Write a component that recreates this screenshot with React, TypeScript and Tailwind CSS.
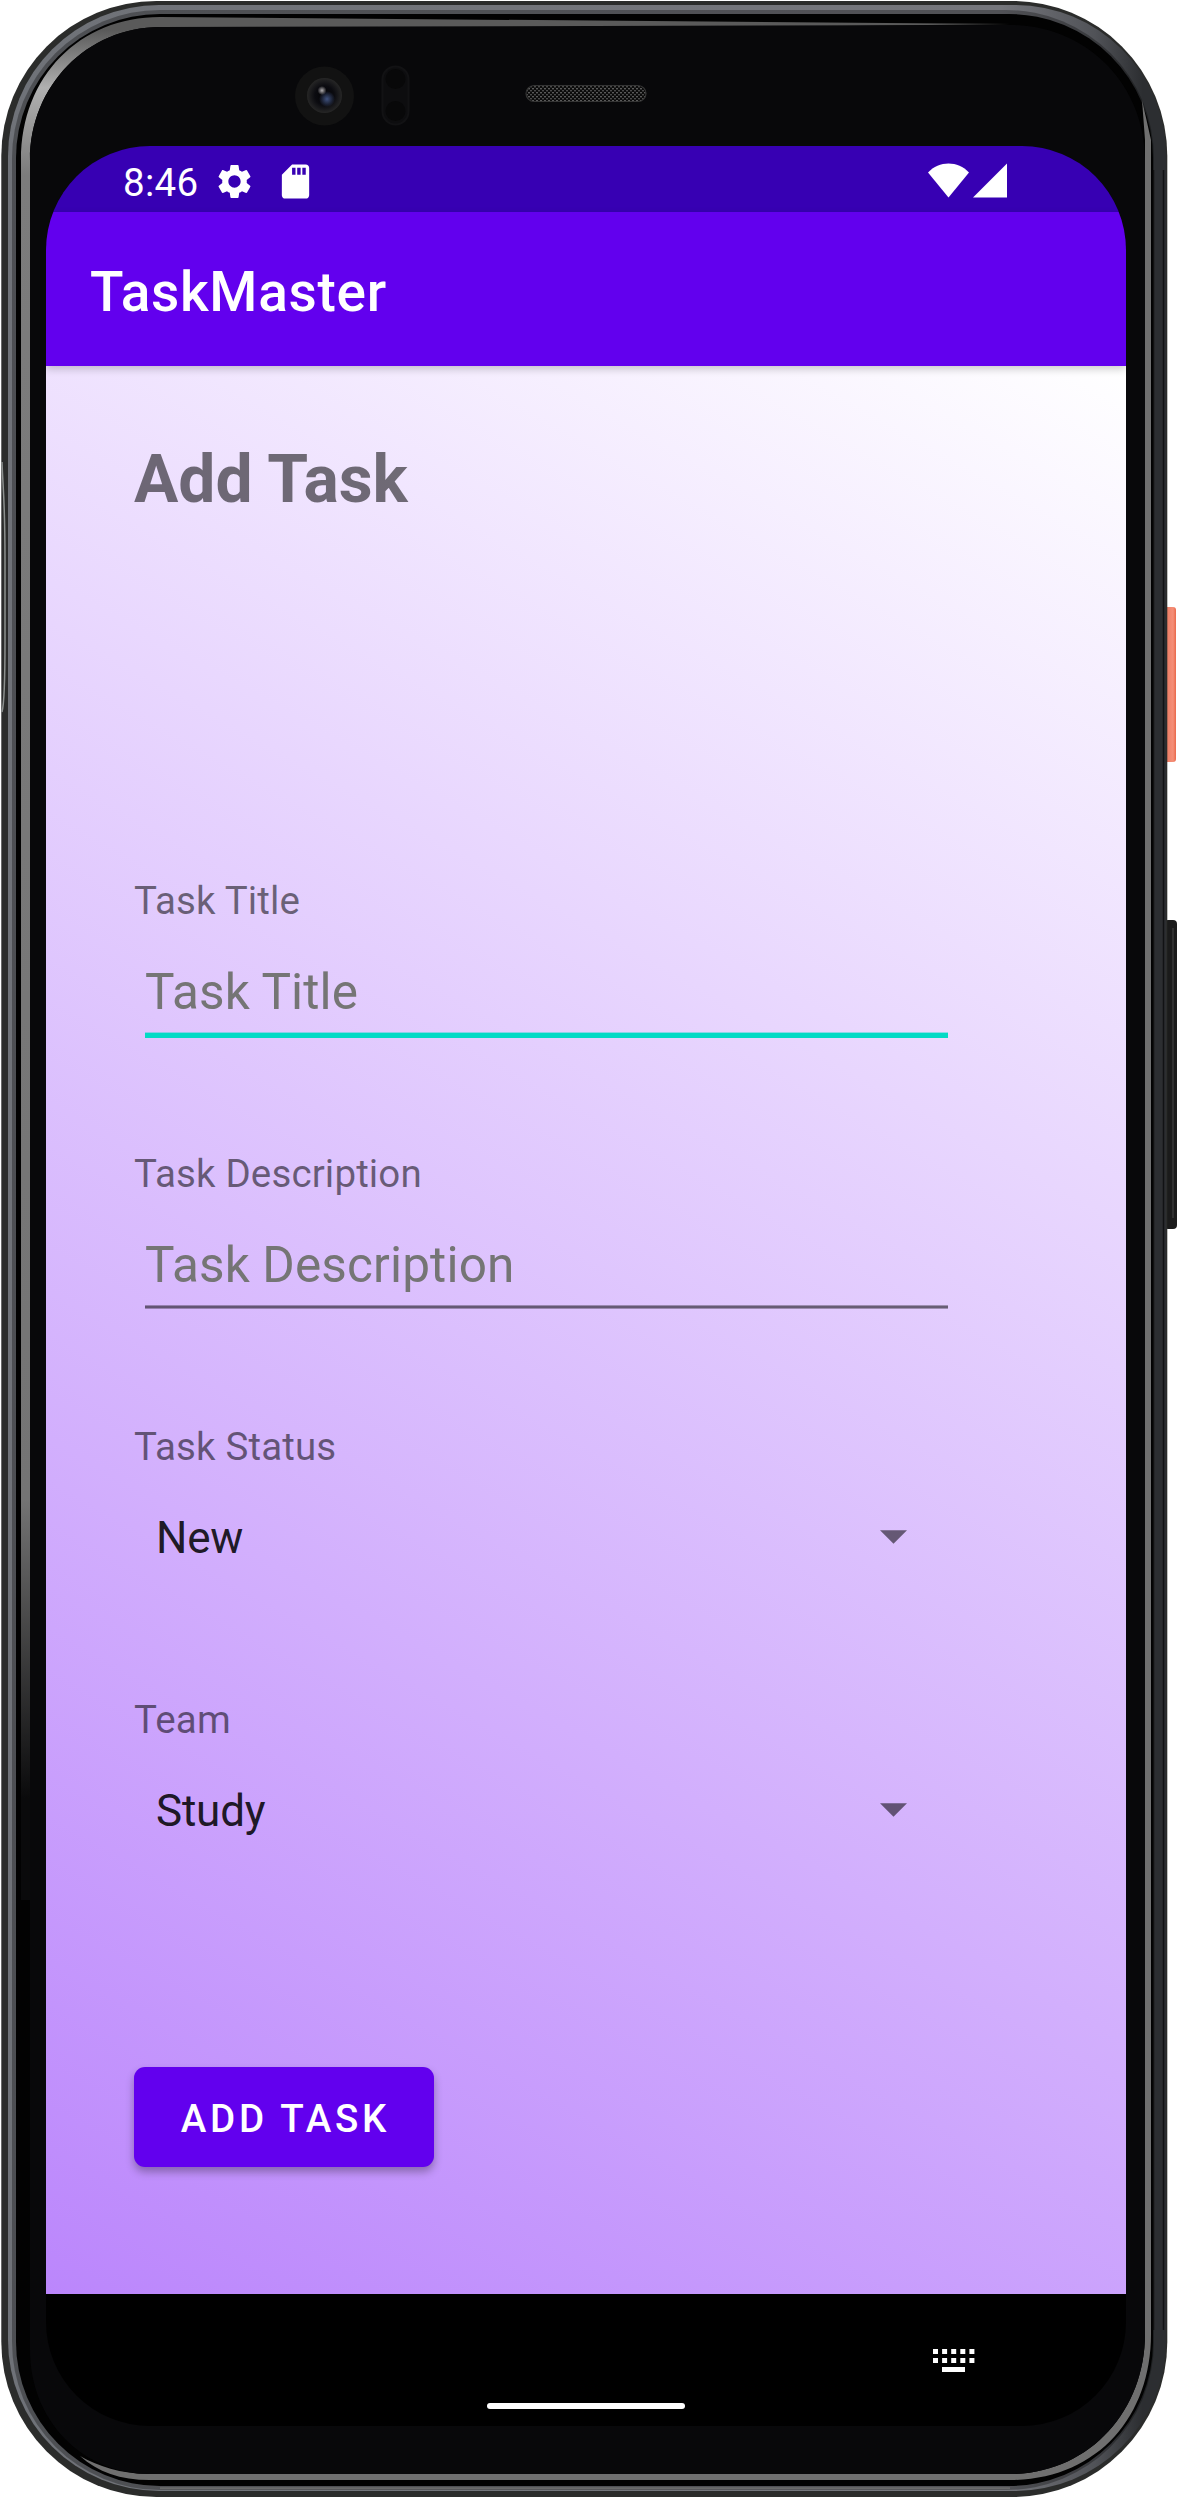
import React from "react";

/* Phone shell artwork: metal rim, glass edge, side keys, camera and speaker. */
function DeviceShell() {
  return (
    <svg className="absolute inset-0" width="1178" height="2498" viewBox="0 0 1178 2498" aria-hidden="true">
      <defs>
        <linearGradient id="rim" gradientUnits="userSpaceOnUse" x1="0" y1="0" x2="1178" y2="0">
          <stop offset="0" stopColor="#6f7278" />
          <stop offset="0.85" stopColor="#75767c" />
          <stop offset="0.93" stopColor="#505257" />
          <stop offset="0.97" stopColor="#2c2e31" />
          <stop offset="1" stopColor="#2c2e31" />
        </linearGradient>
        <linearGradient id="glassLeft" gradientUnits="userSpaceOnUse" x1="0" y1="0" x2="0" y2="2498">
          <stop offset="0" stopColor="#5a5a5a" />
          <stop offset="0.012" stopColor="#5a5a5a" />
          <stop offset="0.035" stopColor="#b0b0b0" />
          <stop offset="0.07" stopColor="#7c7c7c" />
          <stop offset="0.6" stopColor="#747474" />
          <stop offset="0.72" stopColor="#0a0a0b" />
          <stop offset="1" stopColor="#0a0a0b" />
        </linearGradient>
        <linearGradient id="power" x1="0" y1="0" x2="1" y2="0">
          <stop offset="0" stopColor="#c9543b" />
          <stop offset="0.3" stopColor="#ef8068" />
          <stop offset="0.75" stopColor="#f58f78" />
          <stop offset="1" stopColor="#e9694b" />
        </linearGradient>
        <radialGradient id="lens" cx="0.5" cy="0.5" r="0.5">
          <stop offset="0" stopColor="#020205" />
          <stop offset="0.55" stopColor="#0b0b10" />
          <stop offset="1" stopColor="#262626" />
        </radialGradient>
        <radialGradient id="glint" cx="0.5" cy="0.5" r="0.5">
          <stop offset="0" stopColor="#b0adb0" />
          <stop offset="1" stopColor="#b0adb0" stopOpacity="0" />
        </radialGradient>
        <radialGradient id="blueGlint" cx="0.5" cy="0.5" r="0.5">
          <stop offset="0" stopColor="#40527f" />
          <stop offset="1" stopColor="#40527f" stopOpacity="0" />
        </radialGradient>
        <pattern id="mesh" width="4" height="4" patternUnits="userSpaceOnUse">
          <rect width="4" height="4" fill="#0b0b0b" />
          <rect width="2" height="1.4" fill="#5a5a5a" />
          <rect x="2" y="2" width="2" height="1.4" fill="#4a4a4a" />
        </pattern>
      </defs>

      <rect x="1164" y="607" width="12" height="155" rx="3" fill="url(#power)" />
      <rect x="1164" y="920" width="13" height="309" rx="4" fill="#1b1b1b" />
      <rect x="1172" y="928" width="2" height="290" fill="#303030" />

      <rect x="1.3" y="1" width="1166" height="2496" rx="155" fill="#2b2c2b" />
      <rect x="8" y="5" width="1158" height="2486" rx="151" fill="url(#rim)" />
      <rect x="12" y="10" width="1142" height="2480" rx="148" fill="#000" fillOpacity="0.3" />
      <rect x="16" y="14" width="1137" height="2472" rx="144" fill="#020202" />
      <path d="M160 2488.2H1010" stroke="#6a6a6a" strokeWidth="2" />
      <path d="M1153.5 170V2330" stroke="#111" strokeWidth="1.5" />
      <path d="M1163.5 170V2330" stroke="#111214" strokeWidth="1.5" />

      <path d="M1010 24L160 17C80 17 21 76 21 160V1900H30V160C30 86 87 27 160 27H760Z" fill="url(#glassLeft)" />
      <path d="M1145 140V2334C1145 2412 1088 2474 1010 2474H150C120 2474 98 2466 80 2456C98 2472 120 2480 150 2480H1010C1096 2480 1151 2418 1151 2334V140L1142 100Z" fill="#6f6f6f" />
      <path d="M30 160C30 86 87 27 160 27L1010 25C1086 25 1145 84 1145 160V2334C1145 2412 1088 2474 1010 2474H150C82 2474 30 2420 30 2350Z" fill="#08080a" />
      <path d="M2 462C3 490 5 500 5 560V640C5 690 4 705 2 712" fill="none" stroke="#8d918f" strokeWidth="1.5" />

      <circle cx="324.5" cy="96" r="29.5" fill="#121212" />
      <circle cx="324.5" cy="95.5" r="17.5" fill="url(#lens)" />
      <circle cx="327" cy="99" r="8" fill="url(#blueGlint)" />
      <circle cx="322" cy="90.5" r="4.5" fill="url(#glint)" />
      <rect x="382.5" y="66.5" width="26" height="58" rx="13" fill="#0d0d0f" stroke="#121214" strokeWidth="2" />
      <circle cx="395.5" cy="79" r="10" fill="#080809" />
      <circle cx="395.5" cy="111" r="10" fill="#080809" />
      <rect x="526" y="85.5" width="120" height="16" rx="8" fill="url(#mesh)" stroke="#343434" strokeWidth="1.2" />
    </svg>
  );
}

function StatusBar() {
  return (
    <div className="flex h-[66px] shrink-0 items-center bg-[#3700b3] pl-[77px] pr-[118px] text-white">
      <span className="w-[77px] pt-[7px] text-[38.5px] leading-[46px] tracking-[0.3px]">8:46</span>
      <svg className="ml-[14px] mt-[5px]" width="41" height="41" viewBox="0 0 24 24" fill="currentColor">
        <path d="M19.14 12.94c.04-.3.06-.61.06-.94 0-.32-.02-.64-.07-.94l2.03-1.58a.49.49 0 0 0 .12-.61l-1.92-3.32a.488.488 0 0 0-.59-.22l-2.39.96c-.5-.38-1.03-.7-1.62-.94l-.36-2.54a.484.484 0 0 0-.48-.41h-3.84c-.24 0-.43.17-.47.41l-.36 2.54c-.59.24-1.13.57-1.62.94l-2.39-.96c-.22-.08-.47 0-.59.22L2.74 8.87c-.12.21-.08.47.12.61l2.03 1.58c-.05.3-.09.63-.09.94s.02.64.07.94l-2.03 1.58a.49.49 0 0 0-.12.61l1.92 3.32c.12.22.37.29.59.22l2.39-.96c.5.38 1.03.7 1.62.94l.36 2.54c.05.24.24.41.48.41h3.84c.24 0 .44-.17.47-.41l.36-2.54c.59-.24 1.13-.56 1.62-.94l2.39.96c.22.08.47 0 .59-.22l1.92-3.32c.12-.22.07-.47-.12-.61l-2.01-1.58zM12 15.6c-1.98 0-3.6-1.62-3.6-3.6s1.62-3.6 3.6-3.6 3.6 1.62 3.6 3.6-1.62 3.6-3.6 3.6z" />
      </svg>
      <svg className="ml-[20px] mt-[5px]" width="41" height="41" viewBox="0 0 24 24" fill="currentColor">
        <path d="M18 2h-8L4.02 8 4 20c0 1.1.9 2 2 2h12c1.1 0 2-.9 2-2V4c0-1.1-.9-2-2-2zm-6 6h-2V4h2v4zm3 0h-2V4h2v4zm3 0h-2V4h2v4z" />
      </svg>
      <svg className="ml-auto mt-[3px]" width="80" height="35" viewBox="0 0 80 35" fill="currentColor">
        <path d="M0 9.5C11 -2.5 30 -2.5 41 9.5L20.5 34.5Z" />
        <path d="M45 34.5L79 .5V34.5Z" />
      </svg>
    </div>
  );
}

function TextField({ label, focused = false }: { label: string; focused?: boolean }) {
  return (
    <div className="flex h-[273px] w-[825px] flex-col">
      <label className="text-[38.5px] leading-[52px] tracking-[0.14px] text-black/54">{label}</label>
      <div className="mt-[30px] px-[11px]">
        <div className="h-[70px] text-[49.5px] leading-[70px] tracking-[0.14px] text-[#757575]">{label}</div>
        {focused ? (
          <div className="mt-[5px] h-[6px] border-t border-[#03dac5]/40 bg-[#03dac5] bg-clip-padding" />
        ) : (
          <div className="mt-[5px] h-[4px] border-y border-black/30 bg-black/54 bg-clip-padding" />
        )}
      </div>
    </div>
  );
}

function SelectField({ label, value }: { label: string; value: string }) {
  return (
    <div className="flex h-[273px] w-[825px] flex-col">
      <label className="text-[38.5px] leading-[52px] tracking-[0.14px] text-black/54">{label}</label>
      <div className="mt-[35px] flex h-[60px] items-center justify-between pl-[22px] pr-[52px]">
        <span className="text-[44px] leading-[60px] tracking-[-0.2px] text-black/87">{value}</span>
        <svg className="-mt-[2px]" width="27" height="14" viewBox="0 0 27 14">
          <path d="M0 .3H27L13.5 13.8Z" fill="#000" fillOpacity="0.54" />
        </svg>
      </div>
    </div>
  );
}

function NavigationBar() {
  return (
    <div className="flex h-[132px] shrink-0 flex-col bg-black">
      <svg className="ml-[887px] mt-[55px] shrink-0" width="42" height="23" viewBox="0 0 42 23" fill="#fff">
        {[0, 9.1, 18.2, 27.3, 36.4].map((x) => (
          <g key={x}>
            <rect x={x} y="0" width="5" height="5" />
            <rect x={x} y="9" width="5" height="5" />
          </g>
        ))}
        <rect x="9" y="18" width="23" height="5" />
      </svg>
      <div className="mt-[31px] h-[6px] w-[198px] self-center rounded-full bg-white" />
    </div>
  );
}

export default function App() {
  return (
    <div className="relative h-[2498px] w-[1178px] overflow-hidden bg-white pl-[46px] pt-[146px] font-['Roboto',sans-serif]">
      <DeviceShell />
      <div className="relative flex h-[2280px] w-[1080px] flex-col overflow-hidden rounded-[104px]">
        <StatusBar />
        <header className="relative z-10 flex h-[154px] shrink-0 items-center bg-[#6200ee] pl-[44px] pt-[6px] shadow-[0_3px_8px_rgba(0,0,0,0.2)]">
          <h1 className="text-[55px] font-medium leading-[64px] tracking-[0.7px] text-white">TaskMaster</h1>
        </header>
        <main className="flex flex-1 flex-col items-start bg-[linear-gradient(29.26deg,#bb86fc,#ffffff)] pl-[88px] pt-[75px]">
          <h2 className="mb-[356px] text-[66px] font-bold leading-[78px] text-black/54">Add Task</h2>
          <TextField label="Task Title" focused />
          <TextField label="Task Description" />
          <SelectField label="Task Status" value="New" />
          <SelectField label="Team" value="Study" />
          <button className="mt-[100px] flex h-[100px] w-[300px] items-center justify-center rounded-[11px] bg-[#6200ee] pl-[3px] pt-[3px] text-[38.5px] font-medium tracking-[3.75px] text-white shadow-[0_5px_8px_rgba(0,0,0,0.3)]">
            ADD TASK
          </button>
        </main>
        <NavigationBar />
      </div>
    </div>
  );
}
